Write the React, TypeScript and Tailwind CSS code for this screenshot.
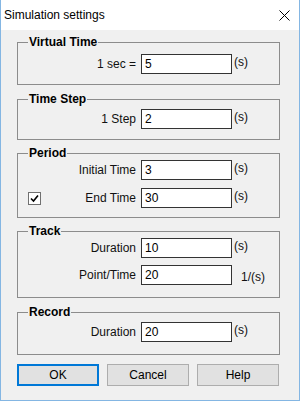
import type { ReactNode } from "react";

const font = { fontFamily: '"Liberation Sans", Arial, sans-serif' };

const Group = ({ title, className, children }: { title: string; className: string; children: ReactNode }) => (
    <fieldset className={`mx-0 ml-[16px] mr-[19px] border border-[#8c8c8c] px-0 ${className}`}>
        <legend className="ml-[10px] px-[1px] text-[12px] font-bold leading-[14px] text-black">{title}</legend>
        {children}
    </fieldset>
);

const Row = ({ label, value, unit = "(s)", check = false, unitLow = false }: { label: string; value: string; unit?: string; check?: boolean; unitLow?: boolean }) => (
    <div className="flex h-[20px] items-center">
        <div className="flex w-[8px] shrink-0" />
        <div className="flex w-[115px] shrink-0 items-center justify-between">
            {check ? (
                <span className="ml-[2px] flex h-[13px] w-[13px] items-center justify-center border border-[#707070] bg-white">
                    <svg width="9" height="9" viewBox="0 0 9 9">
                        <path d="M1 4.5 L3.5 7 L8 1.5" fill="none" stroke="#000" strokeWidth="1.6" />
                    </svg>
                </span>
            ) : (
                <span />
            )}
            <span className="pr-[5px] text-[12px] text-[#111]">{label}</span>
        </div>
        <div className="flex h-[20px] w-[91px] shrink-0 items-center border border-[#333] bg-white pl-[3px] text-[12px] text-black">
            {value}
        </div>
        <span className={`text-[12px] text-[#111] ${unitLow ? "ml-[9px] mt-[4px]" : "ml-[2px] -mt-[4px]"}`}>{unit}</span>
    </div>
);

const Btn = ({ label, primary = false }: { label: string; primary?: boolean }) => (
    <button
        className={`h-[22px] w-[82px] bg-[#e1e1e1] text-[12px] text-black ${primary ? "border-2 border-[#0078d7]" : "border border-[#adadad]"}`}
    >
        {label}
    </button>
);

const App = () => {
    return (
        <div className="h-[401px] w-[300px] overflow-hidden border-x border-b border-[#84b6e3] bg-[#f0f0f0]" style={font}>
            <div className="flex h-[30px] items-center justify-between bg-white pl-[3px] pr-[9px]">
                <span className="text-[12px] text-black">Simulation settings</span>
                <svg width="11" height="11" viewBox="0 0 11 11">
                    <path d="M0.5 0.5 L10.5 10.5 M10.5 0.5 L0.5 10.5" stroke="#000" strokeWidth="1" />
                </svg>
            </div>

            <Group title="Virtual Time" className="mt-[5px] pb-[10px] pt-[5px]">
                <Row label="1 sec =" value="5" />
            </Group>

            <Group title="Time Step" className="mt-[7px] pb-[10px] pt-[3px]">
                <Row label="1 Step" value="2" />
            </Group>

            <Group title="Period" className="mt-[6px] pb-[9px] pt-0">
                <div className="flex flex-col gap-[8px]">
                    <Row label="Initial Time" value="3" />
                    <Row label="End Time" value="30" check />
                </div>
            </Group>

            <Group title="Track" className="mt-[6px] pb-[12px] pt-[0px]">
                <div className="flex flex-col gap-[7px]">
                    <Row label="Duration" value="10" />
                    <Row label="Point/Time" value="20" unit="1/(s)" unitLow />
                </div>
            </Group>

            <Group title="Record" className="mt-[7px] pb-[12px] pt-[3px]">
                <Row label="Duration" value="20" />
            </Group>

            <div className="mt-[9px] flex gap-[8px] pl-[16px]">
                <Btn label="OK" primary />
                <Btn label="Cancel" />
                <Btn label="Help" />
            </div>
        </div>
    );
};

export default App;
